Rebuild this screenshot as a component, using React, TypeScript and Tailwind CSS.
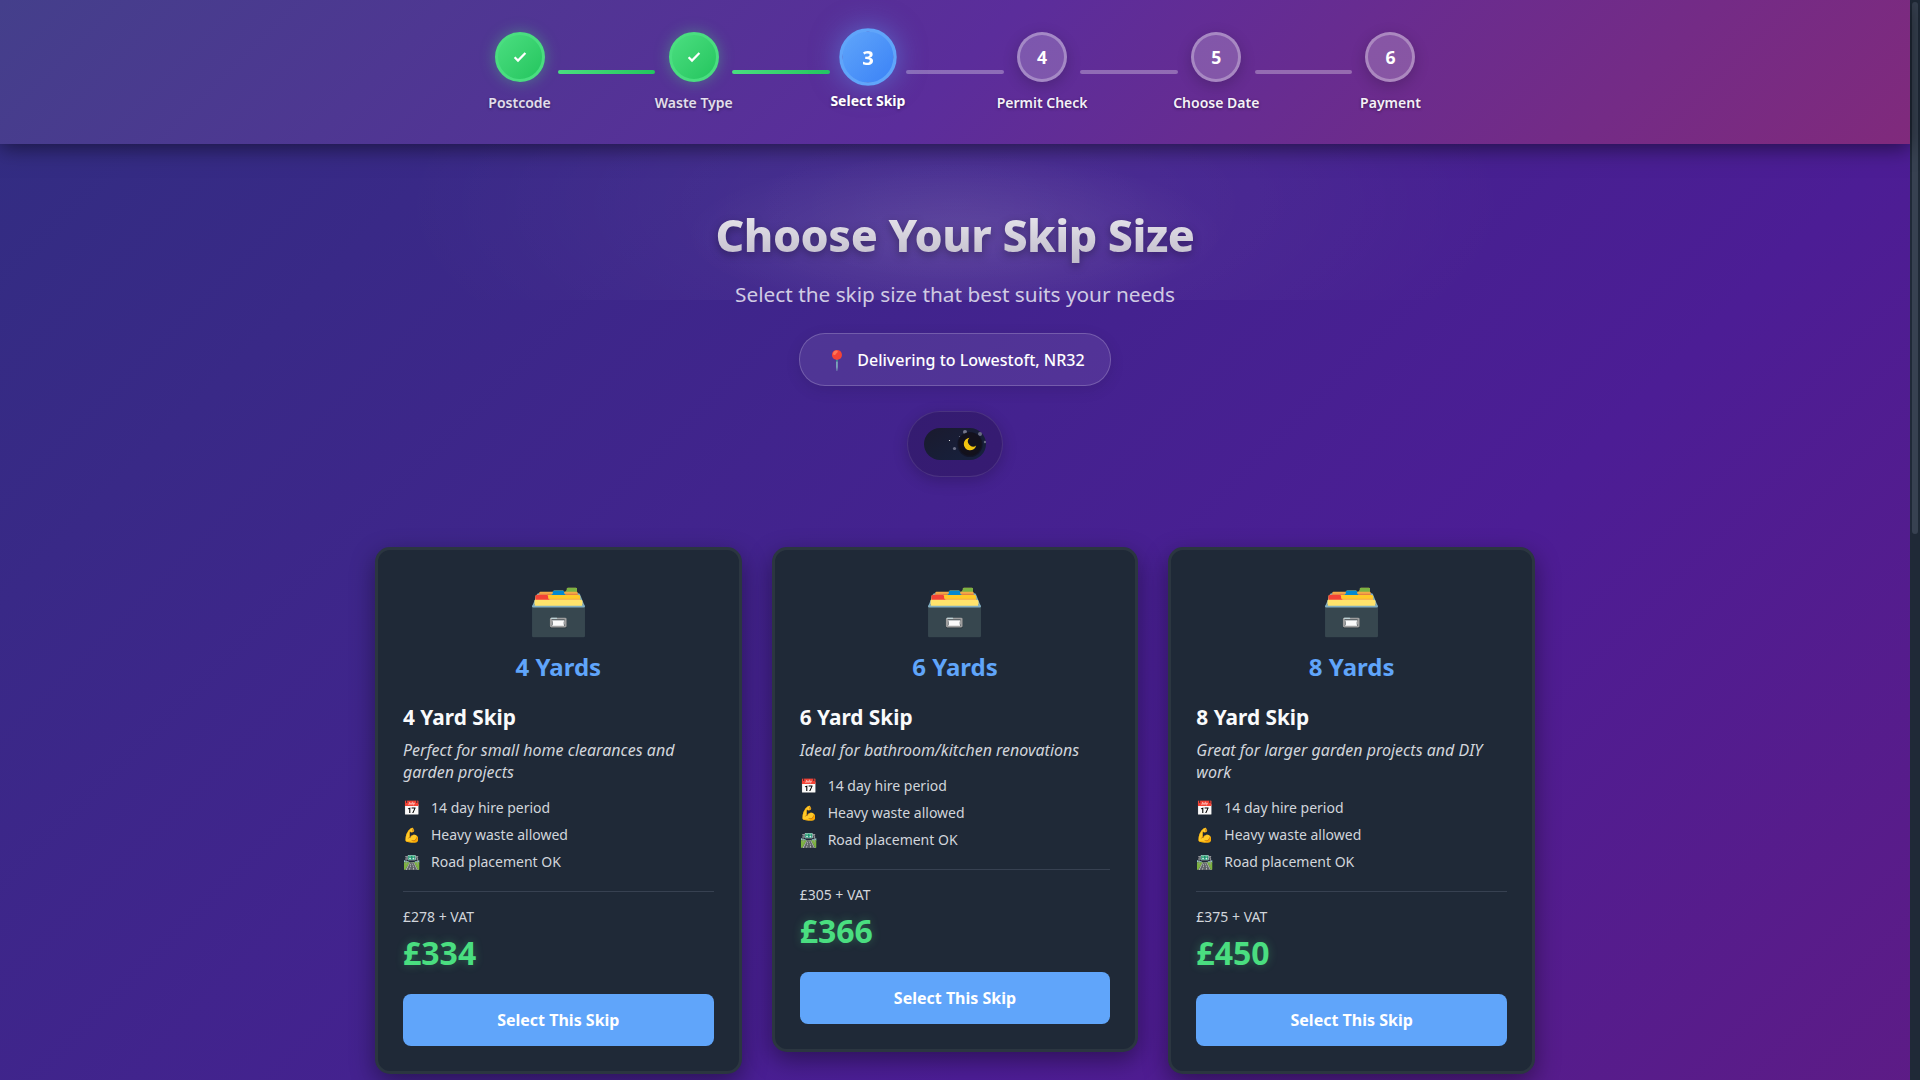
import React from "react";

const steps = [
  { label: "Postcode", state: "done" },
  { label: "Waste Type", state: "done" },
  { label: "Select Skip", state: "active" },
  { label: "Permit Check", state: "todo" },
  { label: "Choose Date", state: "todo" },
  { label: "Payment", state: "todo" },
];

const skips = [
  { size: 4, text: "Perfect for small home clearances and garden projects", net: 278, total: 334 },
  { size: 6, text: "Ideal for bathroom/kitchen renovations", net: 305, total: 366 },
  { size: 8, text: "Great for larger garden projects and DIY work", net: 375, total: 450 },
];

const features = [
  { icon: "📅", text: "14 day hire period" },
  { icon: "💪", text: "Heavy waste allowed" },
  { icon: "🛣️", text: "Road placement OK" },
];

const circleStyles: Record<string, string> = {
  done: "border-[#4ade80] bg-linear-135 from-[#4ade80] to-[#22c55e] shadow-[0_0_15px_rgba(74,222,128,0.4)]",
  active:
    "scale-115 border-[#60a5fa] bg-linear-135 from-[#60a5fa] to-[#3b82f6] shadow-[0_0_25px_rgba(96,165,250,0.5)]",
  todo: "border-white/30 bg-white/20 shadow-[0_4px_15px_rgba(0,0,0,0.2)]",
};

function Header() {
  return (
    <header className="relative z-10 flex h-36 justify-center bg-[linear-gradient(135deg,#443f8b_0%,#5b2d9b_50%,#802a7c_100%)] pt-8 shadow-[0_4px_20px_rgba(0,0,0,0.5)]">
      {steps.map((s, i) => (
        <React.Fragment key={s.label}>
          <div className="flex w-[76.6px] flex-col items-center">
            <div
              className={`flex size-[50px] shrink-0 items-center justify-center rounded-full border-3 text-[17.6px] font-bold text-white ${circleStyles[s.state]}`}
            >
              {s.state === "done" ? (
                <svg width="14" height="14" viewBox="0 0 14 14" fill="none" stroke="white" strokeWidth="2.2">
                  <path d="M1.6 7.2 5 10.6 12.4 3" />
                </svg>
              ) : (
                i + 1
              )}
            </div>
            <div
              className={`mt-3 text-sm leading-[18px] whitespace-nowrap [text-shadow:0_1px_3px_rgba(0,0,0,0.4)] ${
                s.state === "active"
                  ? "-translate-y-0.5 font-bold text-white"
                  : s.state === "done"
                    ? "font-semibold text-white/85"
                    : "font-semibold text-white/95"
              }`}
            >
              {s.label}
            </div>
          </div>
          {i < steps.length - 1 && (
            <div
              className={`mt-[38px] h-1 w-[97.6px] rounded-xs ${
                s.state === "done" ? "bg-linear-to-r from-[#4ade80] to-[#22c55e]" : "bg-white/30"
              }`}
            />
          )}
        </React.Fragment>
      ))}
    </header>
  );
}

function Toggle() {
  return (
    <div className="mt-[25px] flex h-[66px] w-24 items-center justify-center rounded-[33px] border border-white/10 bg-black/20 shadow-[0_4px_15px_rgba(0,0,0,0.2)]">
      <svg width="62" height="32" viewBox="0 0 62 32">
        <defs>
          <linearGradient id="night" x1="0" y1="0" x2="1" y2="1">
            <stop offset="0" stopColor="#1a1a2e" />
            <stop offset="1" stopColor="#16213e" />
          </linearGradient>
        </defs>
        <rect width="62" height="32" rx="16" fill="url(#night)" />
        <g fill="#8b8da3">
          <circle cx="25.5" cy="12.5" r=".6" fill="#fff" />
          <circle cx="30.5" cy="20.5" r="1.6" opacity=".75" />
          <circle cx="41" cy="4" r="2" opacity=".8" />
          <circle cx="56" cy="6" r="2" opacity=".7" />
          <circle cx="61" cy="14" r="1.2" opacity=".7" />
          <circle cx="35.5" cy="8.5" r=".6" opacity=".7" />
        </g>
        <circle cx="46" cy="16.5" r="12.6" fill="#100f1c" opacity=".6" />
        <circle cx="46" cy="16" r="11.5" fill="#13111c" />
        <path d="M45.4 9.8A6.3 6.3 0 1 0 52.2 17.6 5.2 5.2 0 0 1 45.4 9.8Z" fill="#f1c40f" />
      </svg>
    </div>
  );
}

function Card({ skip }: { skip: (typeof skips)[number] }) {
  return (
    <article className="rounded-[15px] border-3 border-[#2b3640] bg-[#1f2937] p-[25px] shadow-[0_8px_25px_rgba(0,0,0,0.4)]">
      <div className="flex h-[71px] items-center justify-center pb-[5px] text-[49px] leading-[66px]">🗃️</div>
      <div className="mt-1 text-center text-2xl leading-[34px] font-bold text-[#60a5fa]">{skip.size} Yards</div>
      <h2 className="mt-[18px] text-[20.8px] leading-[30px] font-bold text-[#f9fafb]">{skip.size} Yard Skip</h2>
      <p className="mt-[7px] text-base leading-[22px] text-[#d1d5db] italic">{skip.text}</p>
      <ul className="mt-[15px] flex flex-col gap-2">
        {features.map((f) => (
          <li key={f.text} className="flex h-[19px] items-center text-sm text-[#d1d5db]">
            <span className="w-7">{f.icon}</span>
            {f.text}
          </li>
        ))}
      </ul>
      <div className="mt-5 border-t border-[#374151] pt-[15px]">
        <div className="text-sm leading-5 text-[#d1d5db]">£{skip.net} + VAT</div>
        <div className="mt-1 text-[32px] leading-[44px] font-bold text-[#4ade80] [text-shadow:0_0_10px_rgba(74,222,128,0.3)]">
          £{skip.total}
        </div>
      </div>
      <button className="mt-[19px] block h-13 w-full rounded-lg bg-[#60a5fa] text-base font-bold text-white">
        Select This Skip
      </button>
    </article>
  );
}

export default function App() {
  return (
    <div className="flex h-[1080px] w-[1920px] overflow-hidden font-['Noto_Sans',sans-serif]">
      <div className="h-[2180px] w-[1910px] bg-[linear-gradient(135deg,#312e81_0%,#4c1d95_50%,#701a75_100%)]">
        <Header />
        <section className="flex flex-col items-center bg-[radial-gradient(ellipse_270px_80px_at_50%_91px,rgba(255,255,255,0.11),transparent),radial-gradient(ellipse_560px_220px_at_50%_60px,rgba(255,255,255,0.06),transparent)] bg-[length:100%_156px] bg-no-repeat">
          <h1 className="mt-[60px] bg-linear-to-b from-[#efedf2] to-[#bdb9c8] bg-clip-text text-[44.8px] leading-[62px] font-extrabold tracking-[-0.5px] text-transparent drop-shadow-[0_3px_4px_rgba(0,0,0,0.3)]">
            Choose Your Skip Size
          </h1>
          <p className="mt-[13px] text-[20.8px] leading-[30px] text-[#d0cbe3]">
            Select the skip size that best suits your needs
          </p>
          <div className="mt-6 flex h-[53px] items-center rounded-[26px] border border-white/20 bg-white/8 px-[25px] text-base font-medium text-white shadow-[0_4px_15px_rgba(0,0,0,0.1)]">
            <span className="mr-2 pt-0.5 text-[19.2px]">📍</span>
            Delivering to Lowestoft, NR32
          </div>
          <Toggle />
        </section>
        <main className="mx-auto mt-[70px] grid w-[1160px] grid-cols-3 items-start gap-[30px]">
          {skips.map((s) => (
            <Card key={s.size} skip={s} />
          ))}
        </main>
      </div>
      <div className="flex w-2.5 justify-center bg-[#1f2937] pt-0.5">
        <div className="h-[532px] w-1.5 rounded-[3px] bg-[#374151]" />
      </div>
    </div>
  );
}
